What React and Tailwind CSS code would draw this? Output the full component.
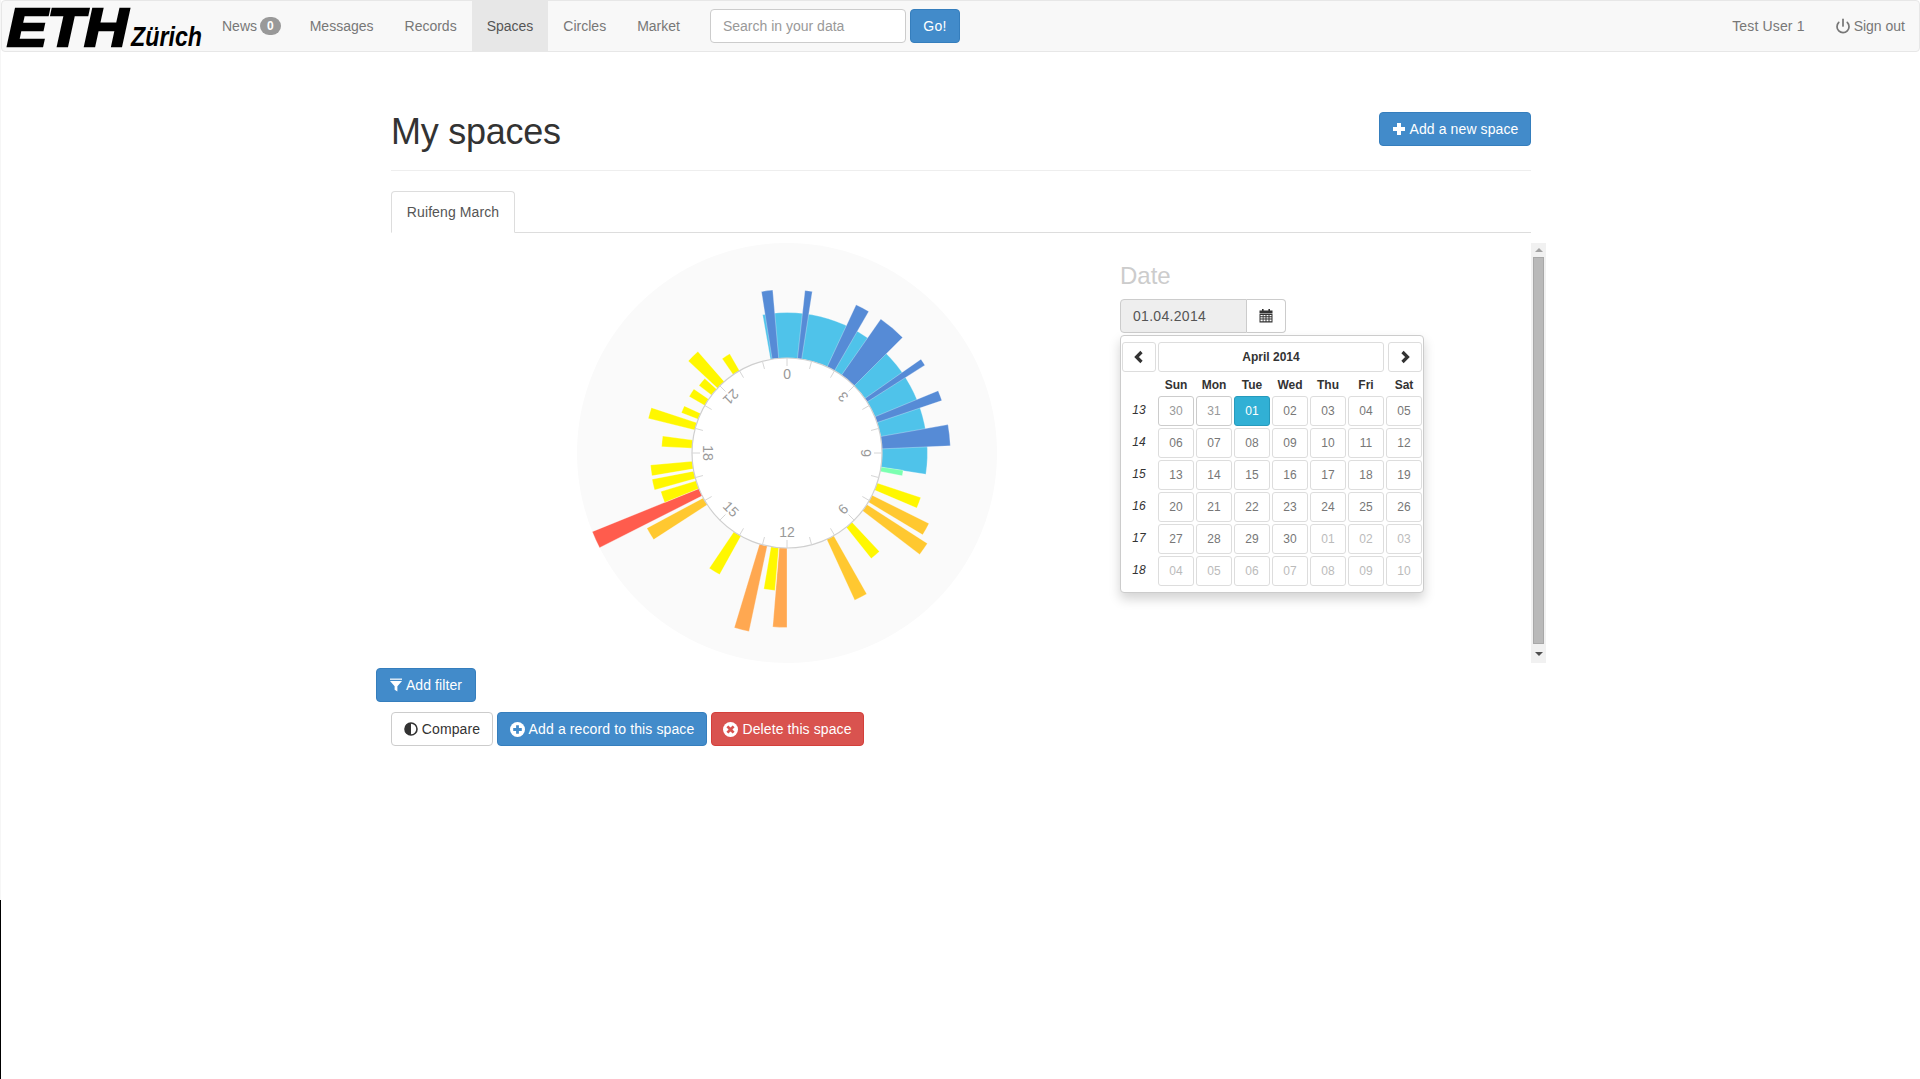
import { Power } from "lucide-react";

const PURPLE_BLUE = "#568bd6";
const YELLOW = "#fff700";
const AMBER = "#ffc830";
const ORANGE = "#ffa851";

const bars = [
  { from: -10, to: 98.7, r: 140.5, color: "#4fc3ea" },
  { from: -9, to: -5, r: 163.5, color: PURPLE_BLUE },
  { from: 6.3, to: 8.9, r: 163.5, color: PURPLE_BLUE },
  { from: 25, to: 30, r: 163.5, color: PURPLE_BLUE },
  { from: 35, to: 45, r: 163.5, color: PURPLE_BLUE },
  { from: 55, to: 57.5, r: 163.5, color: PURPLE_BLUE },
  { from: 67.6, to: 71.3, r: 163.5, color: PURPLE_BLUE },
  { from: 80, to: 87.5, r: 163.5, color: PURPLE_BLUE },
  { from: 98.5, to: 101.2, r: 117.5, color: "#7affb0" },
  { from: 108.4, to: 113, r: 141, color: YELLOW },
  { from: 116.4, to: 121.1, r: 158.5, color: AMBER },
  { from: 122.8, to: 127.4, r: 167, color: AMBER },
  { from: 136.8, to: 141.4, r: 135, color: YELLOW },
  { from: 150.5, to: 155.3, r: 162, color: AMBER },
  { from: 175.3, to: 180, r: 174.5, color: ORANGE, flip: true },
  { from: 170.3, to: 175, r: 138, color: YELLOW, flip: true },
  { from: 163.2, to: 168, r: 182.5, color: ORANGE, flip: true },
  { from: 146, to: 151, r: 139, color: YELLOW, flip: true },
  { from: 118.2, to: 123, r: 159, color: AMBER, flip: true },
  { from: 112, to: 116.8, r: 210, color: "#ff5c4d", flip: true },
  { from: 107, to: 112, r: 132, color: YELLOW, flip: true },
  { from: 101, to: 105.6, r: 137.5, color: YELLOW, flip: true },
  { from: 95, to: 99.6, r: 137, color: YELLOW, flip: true },
  { from: -87.1, to: -82.2, r: 125.5, color: YELLOW },
  { from: -76, to: -71.5, r: 143, color: YELLOW },
  { from: -69.2, to: -65.4, r: 113, color: YELLOW },
  { from: -60, to: -55.5, r: 113, color: YELLOW },
  { from: -52.5, to: -47.8, r: 111, color: YELLOW },
  { from: -47, to: -41.3, r: 135, color: YELLOW },
  { from: -34.5, to: -30, r: 114.5, color: YELLOW },
];

const labels = [
  { text: "0", angle: 0 },
  { text: "3", angle: 45 },
  { text: "6", angle: 90 },
  { text: "6", angle: 135 },
  { text: "12", angle: 180 },
  { text: "15", angle: 225 },
  { text: "18", angle: 270 },
  { text: "21", angle: 315 },
];

const weeks = [
  { n: 13, days: ["30", "31", "01", "02", "03", "04", "05"] },
  { n: 14, days: ["06", "07", "08", "09", "10", "11", "12"] },
  { n: 15, days: ["13", "14", "15", "16", "17", "18", "19"] },
  { n: 16, days: ["20", "21", "22", "23", "24", "25", "26"] },
  { n: 17, days: ["27", "28", "29", "30", "01", "02", "03"] },
  { n: 18, days: ["04", "05", "06", "07", "08", "09", "10"] },
];

const point = (deg, r) => {
  const a = (deg * Math.PI) / 180;
  return [r * Math.sin(a), -r * Math.cos(a)];
};

const sector = (from, to, r, inner = 95) => {
  const [x0, y0] = point(from, r);
  const [x1, y1] = point(to, r);
  const [x2, y2] = point(to, inner);
  const [x3, y3] = point(from, inner);
  const big = to - from > 180 ? 1 : 0;
  return `M${x0} ${y0}A${r} ${r} 0 ${big} 1 ${x1} ${y1}L${x2} ${y2}A${inner} ${inner} 0 ${big} 0 ${x3} ${y3}Z`;
};

const Logo = () => (
  <svg width="205" height="50" viewBox="0 0 205 50" className="shrink-0 overflow-visible">
    <text
      x="5"
      y="45"
      fontFamily="'Liberation Sans', sans-serif"
      fontWeight="700"
      fontStyle="italic"
      fontSize="54"
      textLength="121"
      lengthAdjust="spacingAndGlyphs"
      stroke="#000"
      strokeWidth="2.4"
      fill="#000"
    >
      ETH
    </text>
    <text
      x="129"
      y="45"
      fontFamily="'Liberation Sans', sans-serif"
      fontWeight="700"
      fontStyle="italic"
      fontSize="27"
      textLength="71"
      lengthAdjust="spacingAndGlyphs"
      fill="#000"
    >
      Zürich
    </text>
  </svg>
);

const Chart = () => (
  <svg width="420" height="420" viewBox="-210 -210 420 420" className="block">
    <circle r="210" fill="#fafafa" />
    {bars.map((b, i) => {
      const from = b.flip ? -b.to : b.from;
      const to = b.flip ? -b.from : b.to;
      return <path key={i} d={sector(from, to, b.r)} fill={b.color} stroke="#fff" strokeOpacity="0.5" strokeWidth="0.6" />;
    })}
    <circle r="95" fill="#fff" stroke="#cfcfcf" strokeWidth="1.2" />
    {Array.from({ length: 24 }).map((_, i) => {
      const [x0, y0] = point(i * 15, 95);
      const [x1, y1] = point(i * 15, 87);
      return <line key={i} x1={x0} y1={y0} x2={x1} y2={y1} stroke="#d6d6d6" strokeWidth="1" />;
    })}
    {labels.map((l) => {
      const [x, y] = point(l.angle, 79);
      return (
        <text
          key={l.angle}
          x={x}
          y={y}
          transform={`rotate(${l.angle - 180} ${x} ${y})`}
          textAnchor="middle"
          dominantBaseline="central"
          fontSize="14"
          fontFamily="'Liberation Sans', sans-serif"
          fill="#999"
        >
          {l.text}
        </text>
      );
    })}
  </svg>
);

const CalendarIcon = () => (
  <svg width="14" height="14" viewBox="0 0 14 14" fill="#333">
    <rect x="3" y="0" width="1.6" height="2" />
    <rect x="9.4" y="0" width="1.6" height="2" />
    <rect x="0.5" y="1.5" width="13" height="3" />
    <path
      fillRule="evenodd"
      d="M.5 5h13v8.5H.5zM1.5 6v1.2h2.2V6zm3 0v1.2h2V6zm3 0v1.2h2V6zm3 0v1.2h2V6zM1.5 8.2v1.2h2.2V8.2zm3 0v1.2h2V8.2zm3 0v1.2h2V8.2zm3 0v1.2h2V8.2zM1.5 10.4v1.8h2.2v-1.8zm3 0v1.8h2v-1.8zm3 0v1.8h2v-1.8zm3 0v1.8h2v-1.8z"
    />
  </svg>
);

const Chevron = ({ left }) => (
  <svg width="12" height="14" viewBox="0 0 12 14">
    <polyline
      points={left ? "8.5,2 3.5,7 8.5,12" : "3.5,2 8.5,7 3.5,12"}
      fill="none"
      stroke="#333"
      strokeWidth="3.2"
    />
  </svg>
);

const DatePopup = () => (
  <div className="absolute top-[36px] left-0 z-10 w-[304px] h-[258px] bg-white border border-[#ccc] rounded-[4px] shadow-[0_6px_12px_rgba(0,0,0,0.175)] px-px pt-[6px]">
    <div className="flex">
      <button className="w-[34px] h-[30px] flex items-center justify-center border border-[#ddd] rounded-[3px] bg-white">
        <Chevron left />
      </button>
      <button className="ml-[2px] w-[226px] h-[30px] border border-[#ddd] rounded-[3px] bg-white text-[12px] font-bold text-[#333]">
        April 2014
      </button>
      <button className="ml-[4px] w-[34px] h-[30px] flex items-center justify-center border border-[#ddd] rounded-[3px] bg-white">
        <Chevron />
      </button>
    </div>
    <div className="flex gap-[2px] h-[24px] pt-[2px] items-center text-[12px] font-bold text-[#333]">
      <div className="w-[34px]" />
      {["Sun", "Mon", "Tue", "Wed", "Thu", "Fri", "Sat"].map((d) => (
        <div key={d} className="w-[36px] text-center">
          {d}
        </div>
      ))}
    </div>
    <div className="flex flex-col gap-[2px]">
      {weeks.map((w, wi) => (
        <div key={w.n} className="flex gap-[2px]">
          <div className="w-[34px] h-[30px] text-center text-[12px] italic leading-[29px] text-[#333]">{w.n}</div>
          {w.days.map((d, di) => {
            const active = wi === 0 && di === 2;
            const prev = wi === 0 && di < 2;
            const next = wi === 5 || (wi === 4 && di > 3);
            return (
              <button
                key={d + di}
                className={
                  active
                    ? "w-[36px] h-[30px] text-[12px] rounded-[3px] border border-[#269abc] bg-[#31b0d5] text-white"
                    : prev
                      ? "w-[36px] h-[30px] text-[12px] rounded-[3px] border border-[#ccc] bg-white text-[#999]"
                      : next
                        ? "w-[36px] h-[30px] text-[12px] rounded-[3px] border border-[#ddd] bg-white text-[#bbb]"
                        : "w-[36px] h-[30px] text-[12px] rounded-[3px] border border-[#ddd] bg-white text-[#777]"
                }
              >
                {d}
              </button>
            );
          })}
        </div>
      ))}
    </div>
  </div>
);

const Scrollbar = () => (
  <div className="w-[15px] h-[420px] bg-[#f1f1f1] flex flex-col items-center shrink-0">
    <div className="h-[14px] flex items-center justify-center">
      <div className="w-0 h-0 border-x-[4px] border-x-transparent border-b-[4px] border-b-[#a3a3a3]" />
    </div>
    <div className="w-[11px] h-[387px] bg-[#b9b9b9] border border-[#a8a8a8]" />
    <div className="flex-1 flex items-center justify-center">
      <div className="w-0 h-0 border-x-[4px] border-x-transparent border-t-[4px] border-t-[#505050]" />
    </div>
  </div>
);

export default function App() {
  return (
    <div className="relative h-[1079px] overflow-hidden bg-white font-['Liberation_Sans',Arial,sans-serif] text-[14px] text-[#333]">
      <div className="absolute left-0 top-0 w-px h-[900px] bg-[#f6f6f6]" />
      <div className="absolute left-0 top-[900px] bottom-0 w-px bg-black" />

      <nav className="ml-px h-[52px] flex items-stretch bg-[#f8f8f8] border border-[#e7e7e7] rounded-[4px] text-[#777]">
        <Logo />
        <a className="pl-[15px] pr-[14px] flex items-center">
          News
          <span className="ml-[3px] px-[7px] py-[3px] rounded-[10px] bg-[#999] text-white text-[12px] font-bold leading-none">0</span>
        </a>
        <a className="pl-[15px] pr-[16px] flex items-center">Messages</a>
        <a className="px-[15px] flex items-center">Records</a>
        <a className="px-[15px] flex items-center bg-[#e7e7e7] text-[#555]">Spaces</a>
        <a className="pl-[15px] pr-[16px] flex items-center">Circles</a>
        <a className="px-[15px] flex items-center">Market</a>
        <div className="px-[15px] flex items-center gap-[4px]">
          <input
            placeholder="Search in your data"
            className="w-[196px] h-[34px] px-[12px] bg-white border border-[#ccc] rounded-[4px] outline-none placeholder:text-[#999]"
          />
          <button className="h-[34px] w-[50px] rounded-[4px] border border-[#357ebd] bg-[#428bca] text-white tracking-[0.2px]">Go!</button>
        </div>
        <a className="ml-auto px-[15px] flex items-center tracking-[0.15px]">Test User 1</a>
        <a className="pl-[15px] pr-[14px] flex items-center gap-[3px]">
          <Power size={16} strokeWidth={2.6} />
          Sign out
        </a>
      </nav>

      <div className="pl-[2px]">
        <main className="mx-auto w-[1170px] px-[15px]">
          <div className="h-[119px] pt-[60px] flex justify-between items-start border-b border-[#eee]">
            <h1 className="text-[36px] leading-[40px] text-[#333] tracking-[-0.25px]">My spaces</h1>
            <button className="h-[34px] w-[152px] flex items-center justify-center gap-[4px] rounded-[4px] border border-[#357ebd] bg-[#428bca] text-white tracking-[0.1px]">
              <svg width="14" height="14" viewBox="0 0 14 14" fill="#fff">
                <path d="M5 1h4v4h4v4H9v4H5V9H1V5h4z" />
              </svg>
              Add a new space
            </button>
          </div>

          <div className="mt-[20px] h-[42px] border-b border-[#ddd]">
            <div className="w-[124px] h-[42px] flex items-center justify-center bg-white border border-[#ddd] border-b-white rounded-t-[4px] text-[#555] tracking-[0.1px]">
              Ruifeng March
            </div>
          </div>

          <div className="-mx-[15px] mt-[10px] flex h-[420px]">
            <div className="w-[729px] pl-[201px] shrink-0">
              <Chart />
            </div>
            <div className="flex-1 pl-[15px]">
              <h3 className="mt-[20px] mb-[10px] text-[24px] leading-[26px] text-[#ccc]">Date</h3>
              <div className="relative flex w-[166px] h-[34px]">
                <div className="w-[127px] h-[34px] px-[12px] flex items-center bg-[#eee] border border-[#ccc] rounded-l-[4px] text-[#555] tracking-[0.3px]">
                  01.04.2014
                </div>
                <div className="flex-1 flex items-center justify-center bg-white border border-l-0 border-[#ccc] rounded-r-[4px]">
                  <CalendarIcon />
                </div>
                <DatePopup />
              </div>
            </div>
            <Scrollbar />
          </div>

          <div className="-mx-[15px] mt-[5px]">
            <button className="h-[34px] w-[100px] flex items-center justify-center gap-[4px] rounded-[4px] border border-[#357ebd] bg-[#428bca] text-white tracking-[0.1px]">
              <svg width="12" height="15" viewBox="0 0 13 15" fill="#fff">
                <rect x="0" y="0" width="13" height="1.3" />
                <path d="M0 2.6h13L8 8.4V14L5 12V8.4z" />
              </svg>
              Add filter
            </button>
          </div>

          <div className="mt-[10px] flex gap-[4px]">
            <button className="h-[34px] w-[102px] flex items-center justify-center gap-[4px] rounded-[4px] border border-[#ccc] bg-white text-[#333] tracking-[0.1px]">
              <svg width="14" height="14" viewBox="0 0 14 14">
                <circle cx="7" cy="7" r="6" fill="#fff" stroke="#333" strokeWidth="1.6" />
                <path d="M7 1a6 6 0 0 0 0 12z" fill="#333" />
              </svg>
              Compare
            </button>
            <button className="h-[34px] w-[210px] flex items-center justify-center gap-[4px] rounded-[4px] border border-[#357ebd] bg-[#428bca] text-white tracking-[0.12px]">
              <svg width="15" height="15" viewBox="0 0 14 14">
                <circle cx="7" cy="7" r="7" fill="#fff" />
                <path d="M5.7 3h2.6v2.7H11v2.6H8.3V11H5.7V8.3H3V5.7h2.7z" fill="#428bca" />
              </svg>
              Add a record to this space
            </button>
            <button className="h-[34px] w-[153px] flex items-center justify-center gap-[4px] rounded-[4px] border border-[#d43f3a] bg-[#d9534f] text-white tracking-[0.1px]">
              <svg width="15" height="15" viewBox="0 0 14 14">
                <circle cx="7" cy="7" r="7" fill="#fff" />
                <path d="M5 3.2 7 5.2l2-2 1.8 1.8-2 2 2 2-1.8 1.8-2-2-2 2L3.2 9l2-2-2-2z" fill="#d9534f" />
              </svg>
              Delete this space
            </button>
          </div>
        </main>
      </div>
    </div>
  );
}
